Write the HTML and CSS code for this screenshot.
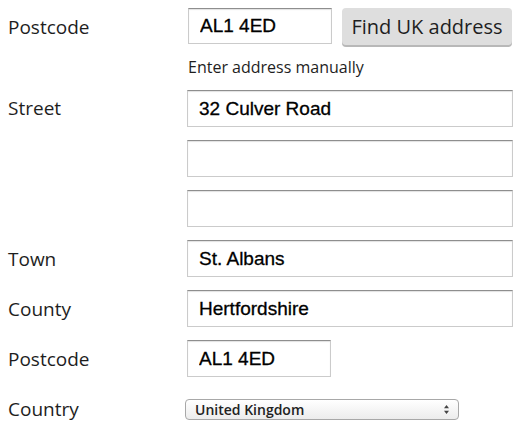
FILE: index.html
```html
<!DOCTYPE html>
<html lang="en">
<head>
<meta charset="utf-8">
<title>Address</title>
<link rel="stylesheet" href="styles.css">
</head>
<body>
<form class="form">
  <div class="row">
    <label class="label">Postcode</label>
    <div class="field field-inline">
      <input class="input input-short" type="text" value="AL1 4ED">
      <button class="btn" type="button">Find UK address</button>
    </div>
  </div>
  <div class="row row-manual">
    <span></span>
    <a class="manual">Enter address manually</a>
  </div>
  <div class="row row-top">
    <label class="label">Street</label>
    <div class="field field-stack">
      <input class="input" type="text" value="32 Culver Road">
      <input class="input" type="text" value="">
      <input class="input" type="text" value="">
    </div>
  </div>
  <div class="row">
    <label class="label">Town</label>
    <div class="field"><input class="input" type="text" value="St. Albans"></div>
  </div>
  <div class="row">
    <label class="label">County</label>
    <div class="field"><input class="input" type="text" value="Hertfordshire"></div>
  </div>
  <div class="row">
    <label class="label">Postcode</label>
    <div class="field"><input class="input input-short2" type="text" value="AL1 4ED"></div>
  </div>
  <div class="row row-country">
    <label class="label">Country</label>
    <div class="field">
      <div class="select">
        <span class="select-text">United Kingdom</span>
        <svg class="arrows" width="7" height="11" viewBox="0 0 7 11"><path d="M3.5 1 L6 4.2 H1 Z M3.5 10 L6 6.8 H1 Z" fill="#444"/></svg>
      </div>
    </div>
  </div>
</form>
</body>
</html>
```
FILE: styles.css
```css
html, body {
  margin: 0;
  background: #fff;
}
body {
  padding: 8px;
  font-family: "Open Sans", "Noto Sans", sans-serif;
  color: #1b1b1b;
}
.form {
  display: flex;
  flex-direction: column;
  gap: 13px;
}
.row {
  display: grid;
  grid-template-columns: 179px 1fr;
  align-items: center;
}
.row-top {
  align-items: start;
}
.row-top .label {
  line-height: 37px;
}
.label {
  font-size: 19px;
  color: #1e1e1e;
}
.field-inline {
  display: flex;
  gap: 10px;
  align-items: flex-start;
}
.field-stack {
  display: flex;
  flex-direction: column;
  gap: 13px;
}
.input {
  box-sizing: border-box;
  display: block;
  width: 326px;
  height: 37px;
  margin: 0;
  padding: 0 11px;
  border: 1px solid #cbcbcb;
  border-top-color: #8e8e8e;
  box-shadow: inset 0 1px 1px rgba(0,0,0,0.12);
  background: #fff;
  font-family: "Liberation Sans", Arial, sans-serif;
  font-weight: 400;
  font-size: 19px;
  color: #000;
  -webkit-text-stroke: 0.3px #000;
  outline: none;
}
.input-short {
  width: 144px;
  margin-left: 1px;
  height: 36px;
}
.input-short2 {
  width: 144px;
}
.btn {
  box-sizing: border-box;
  height: 37px;
  width: 170px;
  padding: 0;
  border: none;
  border-radius: 4px;
  background: #dedede;
  box-shadow: 0 2px 0 #b8b8b8;
  font-family: "Open Sans", "Noto Sans", sans-serif;
  font-size: 20px;
  color: #1e1e1e;
}
.row-manual {
  margin-top: -2px;
  margin-bottom: -1px;
}
.manual {
  font-size: 16px;
  line-height: 22px;
  color: #1e1e1e;
  margin-left: 1px;
}
.row-country {
  margin-top: 6px;
}
.select {
  box-sizing: border-box;
  width: 274px;
  height: 21px;
  margin-left: -2px;
  border: 1px solid #a8a8a8;
  border-radius: 4px;
  background: linear-gradient(#ffffff, #ececec);
  display: flex;
  align-items: center;
  justify-content: space-between;
  padding: 0 8px 0 9px;
}
.select-text {
  font-family: "Open Sans", "Noto Sans", sans-serif;
  font-size: 14px;
  font-weight: 600;
  color: #222;
}
.arrows {
  display: block;
}
```
